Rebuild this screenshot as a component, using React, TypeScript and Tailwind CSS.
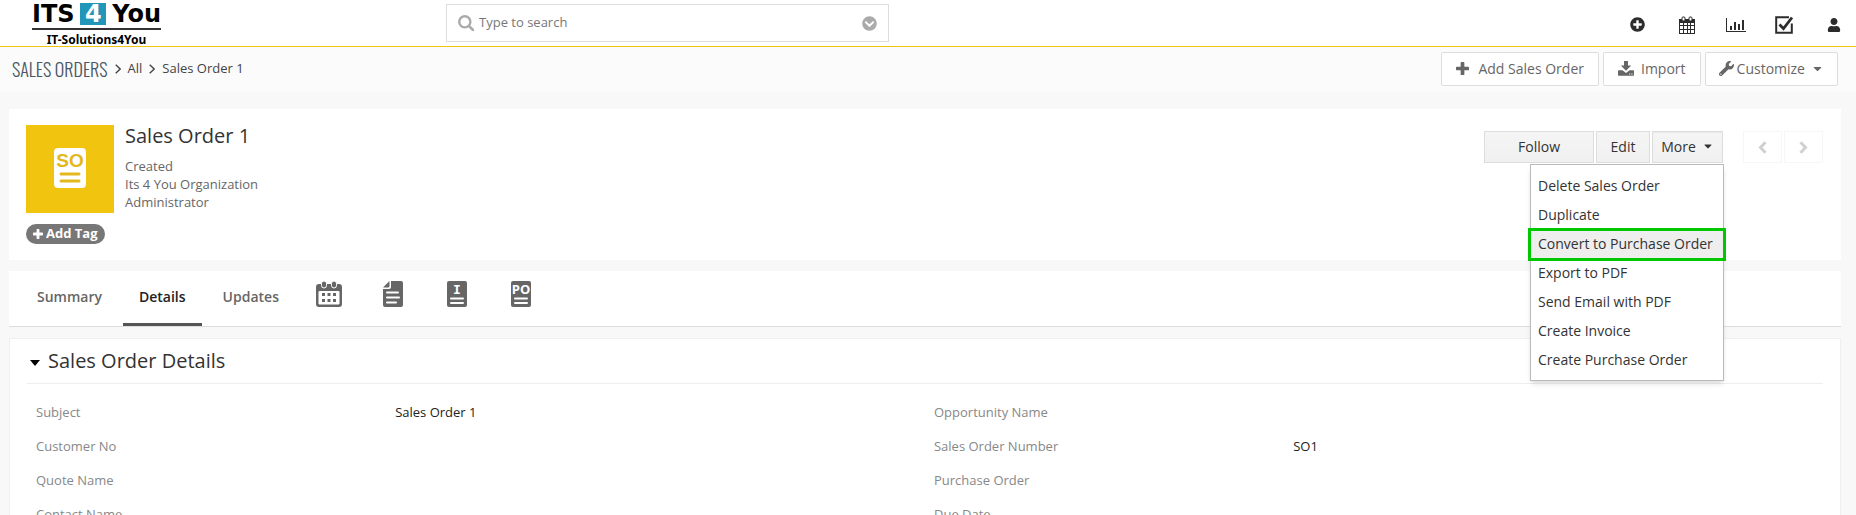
import { useState } from 'react'
import {
    FaCaretDown,
    FaChevronCircleDown,
    FaPlusCircle,
    FaUser,
    FaWrench
} from 'react-icons/fa'

const CalendarGridIcon = () => (
    <svg width="16" height="18" viewBox="0 0 16 18" aria-hidden="true">
        <path d="M0 3h16v15H0z" fill="#2c2c2c" />
        <path
            d="M1 7h3v2H1zM5 7h3v2H5zM9 7h2v2H9zM12 7h3v2h-3zM1 10h3v3H1zM5 10h3v3H5zM9 10h2v3H9zM12 10h3v3h-3zM1 14h3v3H1zM5 14h3v3H5zM9 14h2v3H9zM12 14h3v3h-3z"
            fill="#fff"
        />
        <rect x="3" y="1" width="3" height="4" rx="1" fill="#fff" stroke="#2c2c2c" />
        <rect x="10" y="1" width="3" height="4" rx="1" fill="#fff" stroke="#2c2c2c" />
    </svg>
)

const BarChartIcon = () => (
    <svg width="20" height="16" viewBox="0 0 20 16" fill="#2c2c2c" aria-hidden="true">
        <path d="M0 1h1v13h19v1H0zM4 9h2v4H4zM8 5h2v8H8zM12 7h2v6h-2zM16 3h2v10h-2z" />
    </svg>
)

const TaskIcon = () => (
    <svg width="19" height="18" viewBox="0 0 19 18" fill="none" stroke="#2c2c2c" aria-hidden="true">
        <path d="M14 1.2H1.2v15.6h15.6V7.5" strokeWidth="2" />
        <path d="M4.5 8.5l4 4.2L17 1.5" strokeWidth="2.8" />
    </svg>
)

const SearchIcon = () => (
    <svg width="16" height="16" viewBox="0 0 16 16" fill="none" stroke="currentColor" aria-hidden="true">
        <circle cx="6.8" cy="6.8" r="5.6" strokeWidth="2.4" />
        <path d="M10.8 10.8 15 15" strokeWidth="2.6" strokeLinecap="round" />
    </svg>
)

const PlusIcon = ({ size }: { size: number }) => (
    <svg width={size} height={size} viewBox="0 0 14 14" fill="currentColor" aria-hidden="true">
        <path d="M5.9 0h2.2a.9.9 0 0 1 .9.9V5h4.1a.9.9 0 0 1 .9.9v2.2a.9.9 0 0 1-.9.9H9v4.1a.9.9 0 0 1-.9.9H5.9a.9.9 0 0 1-.9-.9V9H.9a.9.9 0 0 1-.9-.9V5.9A.9.9 0 0 1 .9 5H5V.9a.9.9 0 0 1 .9-.9z" />
    </svg>
)

const ImportIcon = () => (
    <svg width="16" height="15" viewBox="0 0 16 15" fill="currentColor" aria-hidden="true">
        <path d="M6 0h4v4.5h3.2L8 9.7 2.8 4.5H6z" />
        <path d="M.8 9.2h3.6L8 12l3.6-2.8h3.6a.8.8 0 0 1 .8.8v4a.8.8 0 0 1-.8.8H.8A.8.8 0 0 1 0 14v-4a.8.8 0 0 1 .8-.8z" />
        <path d="M11.2 12.4h1.1v1.1h-1.1zM13.4 12.4h1.1v1.1h-1.1z" fill="#fff" />
    </svg>
)

const Crumb = () => (
    <svg width="6" height="10" viewBox="0 0 6 10" fill="none" stroke="#444" strokeWidth="1.4" className="mx-[7px]" aria-hidden="true">
        <path d="M.7.7 5.2 5 .7 9.3" />
    </svg>
)

const PagerArrow = ({ path }: { path: string }) => (
    <svg width="9" height="13" viewBox="0 0 9 13" fill="none" stroke="#d0d0d0" strokeWidth="3" aria-hidden="true">
        <path d={path} />
    </svg>
)

const EventsIcon = () => (
    <svg width="26" height="26" viewBox="0 0 26 26" aria-hidden="true">
        <rect x="0" y="3" width="26" height="23" rx="3" fill="#666" />
        <rect x="2.5" y="10" width="21" height="13.5" rx="1" fill="#fff" />
        <rect x="5.5" y="0" width="5" height="7" rx="2.5" fill="#666" stroke="#fff" />
        <rect x="15.5" y="0" width="5" height="7" rx="2.5" fill="#666" stroke="#fff" />
        <path d="M6 12h3v3H6zM11.5 12h3v3h-3zM17 12h3v3h-3zM6 18h3v3H6zM11.5 18h3v3h-3zM17 18h3v3h-3z" fill="#666" />
    </svg>
)

const DocumentIcon = () => (
    <svg width="20" height="26" viewBox="0 0 20 26" aria-hidden="true">
        <path d="M8 0h10a2 2 0 0 1 2 2v22a2 2 0 0 1-2 2H2a2 2 0 0 1-2-2V8h6a2 2 0 0 0 2-2z" fill="#666" />
        <path d="M0 6.5 6.5 0v5a1.5 1.5 0 0 1-1.5 1.5z" fill="#666" />
        <path d="M4 11.5h11M4 16.5h12M4 21.5h9" stroke="#fff" strokeWidth="2" strokeLinecap="round" />
    </svg>
)

const ModuleIcon = ({ code }: { code: string }) => (
    <svg width="20" height="26" viewBox="0 0 20 26" aria-hidden="true">
        <rect width="20" height="26" rx="2" fill="#666" />
        <text
            x="10"
            y="13"
            textAnchor="middle"
            fill="#fff"
            fontSize="13"
            fontWeight="700"
            fontFamily={code.length > 1 ? 'Open Sans, sans-serif' : 'DejaVu Sans Mono, monospace'}
        >
            {code}
        </text>
        <path d="M4 17.5h12M4 22h12" stroke="#fff" strokeWidth="2" strokeLinecap="round" />
    </svg>
)

const menuItems = [
    'Delete Sales Order',
    'Duplicate',
    'Convert to Purchase Order',
    'Export to PDF',
    'Send Email with PDF',
    'Create Invoice',
    'Create Purchase Order'
]

const tabs = ['Summary', 'Details', 'Updates']

const relatedTabs = [
    { label: 'Calendar', icon: <EventsIcon /> },
    { label: 'Documents', icon: <DocumentIcon /> },
    { label: 'Invoices', icon: <ModuleIcon code="I" /> },
    { label: 'Purchase Orders', icon: <ModuleIcon code="PO" /> }
]

const topLinks = [
    { label: 'Quick create', icon: <FaPlusCircle size={15} /> },
    { label: 'Calendar', icon: <CalendarGridIcon /> },
    { label: 'Reports', icon: <BarChartIcon /> },
    { label: 'Tasks', icon: <TaskIcon /> },
    { label: 'User', icon: <FaUser size={14} /> }
]

const fields = [
    ['Subject', 'Sales Order 1', 'Opportunity Name', ''],
    ['Customer No', '', 'Sales Order Number', 'SO1'],
    ['Quote Name', '', 'Purchase Order', ''],
    ['Contact Name', '', 'Due Date', '']
]

const Header = () => (
    <header className="flex h-[47px] items-center justify-between border-b border-[#f1c40f] bg-white pl-8 pr-[9px]">
        <a
            href="#home"
            aria-label="ITS4You"
            className="flex h-full w-[129px] flex-col items-center pt-[3px] font-['DejaVu_Sans'] font-bold text-black"
        >
            <span className="flex w-full items-center justify-between border-b-2 border-[#333] pb-[3px] text-[24px] leading-[22px]">
                <span>ITS</span>
                <span className="w-[26px] bg-[#2196b8] text-center text-white">4</span>
                <span>You</span>
            </span>
            <span className="pt-1 font-['Noto_Sans'] text-[12px] leading-[12px]">IT-Solutions4You</span>
        </a>
        <div className="mr-auto ml-[285px] flex h-[38px] w-[443px] items-center border border-[#ddd] px-[11px] text-[#aaa]">
            <SearchIcon />
            <input
                type="text"
                aria-label="Search"
                placeholder="Type to search"
                className="min-w-0 flex-1 px-[5px] text-[13px] outline-none placeholder:text-[#777]"
            />
            <button type="button" aria-label="Advanced search">
                <FaChevronCircleDown size={15} />
            </button>
        </div>
        <nav className="flex items-center pt-[3px] text-[#2c2c2c]">
            {topLinks.map((link) => (
                <a key={link.label} href="#top" aria-label={link.label} className="ml-[22px] flex w-[27px] justify-center">
                    {link.icon}
                </a>
            ))}
        </nav>
    </header>
)

const moduleButton = 'flex h-[34px] items-center rounded-xs border border-[#ddd] bg-white pb-[2px] text-[14px] text-[#666]'

const ModuleBar = () => (
    <div className="flex h-[45px] items-start justify-between bg-[#fbfbfb] pt-[5px] pl-3 pr-[18px]">
        <div className="flex h-[34px] items-center text-[13px] text-[#444]">
            <h1 className="font-['Oswald','Open_Sans_Condensed','Roboto_Condensed','Noto_Sans_Condensed','Liberation_Sans'] text-[18px] font-light text-[#4a5865]">
                SALES ORDERS
            </h1>
            <Crumb />
            <a href="#all">All</a>
            <Crumb />
            <a href="#record">Sales Order 1</a>
        </div>
        <div className="flex gap-1">
            <button type="button" className={`${moduleButton} gap-[9px] px-[14px]`}>
                <PlusIcon size={13} />
                Add Sales Order
            </button>
            <button type="button" className={`${moduleButton} gap-[7px] px-[14px]`}>
                <ImportIcon />
                Import
            </button>
            <button type="button" className={`${moduleButton} gap-[3px] px-[13px]`}>
                <FaWrench size={15} />
                Customize
                <FaCaretDown size={13} className="ml-[3px]" />
            </button>
        </div>
    </div>
)

const recordButton = 'h-8 border border-[#ddd] bg-linear-to-b from-[#f5f5f5] to-[#f0f0f0] pb-[2px] text-[14px] text-[#333]'

const RecordHeader = () => {
    const [menuOpen, setMenuOpen] = useState(true)

    return (
        <section className="flex h-[151px] justify-between bg-white pt-4 pl-[17px] pr-[18px]">
            <div>
                <div className="flex gap-[11px]">
                    <div className="flex size-[88px] items-center justify-center bg-[#f1c40f]">
                        <svg width="32" height="42" viewBox="0 0 32 42" aria-hidden="true">
                            <rect x="0" y="0" width="32" height="40" rx="4" fill="#fff" />
                            <text
                                x="16"
                                y="19"
                                textAnchor="middle"
                                fill="#e3b81b"
                                fontSize="19"
                                fontWeight="700"
                                fontFamily="Liberation Sans, sans-serif"
                            >
                                SO
                            </text>
                            <path d="M7 26h18M7 33h18" stroke="#e3b81b" strokeWidth="3" strokeLinecap="round" />
                        </svg>
                    </div>
                    <div className="text-[13px] leading-[18px] text-[#666]">
                        <h2 className="mb-[10px] text-[20px] leading-[22px] text-[#333]">Sales Order 1</h2>
                        <p>Created</p>
                        <p>Its 4 You Organization</p>
                        <p>Administrator</p>
                    </div>
                </div>
                <button
                    type="button"
                    className="mt-[11px] flex h-5 items-center gap-[3px] rounded-full bg-[#777] px-[7px] text-[13px] font-bold text-white"
                >
                    <PlusIcon size={10} />
                    Add Tag
                </button>
            </div>
            <div className="flex items-start pt-[6px]">
                <div className="relative flex gap-[2px]">
                    <button type="button" className={`${recordButton} w-[110px]`}>Follow</button>
                    <button type="button" className={`${recordButton} w-[54px]`}>Edit</button>
                    <button
                        type="button"
                        onClick={() => setMenuOpen(!menuOpen)}
                        aria-haspopup="true"
                        aria-expanded={menuOpen}
                        className={`${recordButton} flex w-[71px] items-center justify-center gap-[6px] inset-shadow-xs`}
                    >
                        More
                        <FaCaretDown size={12} />
                    </button>
                    {menuOpen && (
                        <ul className="absolute top-[33px] -right-px z-10 w-[194px] border border-[#bbb] bg-white py-[6px] shadow-md">
                            {menuItems.map((item) => (
                                <li key={item} className="relative">
                                    <a
                                        href="#action"
                                        className={`block px-[7px] text-[14px] leading-[29px] whitespace-nowrap text-[#333] ${item === 'Convert to Purchase Order' ? 'bg-[#eee]' : ''}`}
                                    >
                                        {item}
                                    </a>
                                    {item === 'Convert to Purchase Order' && (
                                        <span className="absolute -inset-x-[3px] -top-px -bottom-[3px] border-3 border-[#00c800]" />
                                    )}
                                </li>
                            ))}
                        </ul>
                    )}
                </div>
                <div className="ml-5 flex gap-[2px]">
                    <button type="button" aria-label="Previous" className="flex h-8 w-[39px] items-center justify-center border border-[#f6f6f6]">
                        <PagerArrow path="M7.5 1.2 2.5 6.5l5 5.3" />
                    </button>
                    <button type="button" aria-label="Next" className="flex h-8 w-[39px] items-center justify-center border border-[#f6f6f6]">
                        <PagerArrow path="M1.5 1.2l5 5.3-5 5.3" />
                    </button>
                </div>
            </div>
        </section>
    )
}

const RelatedTabs = () => {
    const [active, setActive] = useState('Details')

    return (
        <nav className="mt-[11px] flex h-14 border-b border-[#ddd] bg-white pl-3 text-[14px] font-semibold">
            <div className="flex gap-[5px]">
                {tabs.map((tab) => (
                    <button
                        key={tab}
                        type="button"
                        onClick={() => setActive(tab)}
                        className={`border-b-3 px-4 pb-[2px] ${tab === active ? 'border-[#555] text-[#222]' : 'border-transparent text-[#666]'}`}
                    >
                        {tab}
                    </button>
                ))}
            </div>
            <div className="ml-[6px] flex gap-2">
                {relatedTabs.map((tab) => (
                    <button key={tab.label} type="button" aria-label={tab.label} className="flex w-14 items-start justify-center pt-[10px]">
                        {tab.icon}
                    </button>
                ))}
            </div>
        </nav>
    )
}

const DetailsBlock = () => (
    <section className="mt-[11px] border border-[#f0f0f0] bg-white px-[17px]">
        <h3 className="flex h-[45px] items-center gap-2 border-b border-[#eee] pl-[3px] text-[20px] text-[#333]">
            <svg width="10" height="6" viewBox="0 0 10 6" className="mt-1" aria-hidden="true">
                <path d="M0 0h10L5 6z" fill="#000" />
            </svg>
            Sales Order Details
        </h3>
        <table className="mt-3 w-full table-fixed text-left text-[13px]">
            <colgroup>
                <col className="w-[20%]" />
                <col className="w-[30%]" />
                <col className="w-[20%]" />
                <col className="w-[30%]" />
            </colgroup>
            <tbody>
                {fields.map(([label, value, secondLabel, secondValue]) => (
                    <tr key={label} className="h-[34px]">
                        <th scope="row" className="px-[9px] font-normal text-[#888]">{label}</th>
                        <td className="px-[9px] text-[#222]">{value}</td>
                        <th scope="row" className="px-[9px] font-normal text-[#888]">{secondLabel}</th>
                        <td className="px-[9px] text-[#222]">{secondValue}</td>
                    </tr>
                ))}
            </tbody>
        </table>
    </section>
)

export default function App() {
    return (
        <div className="h-screen overflow-hidden bg-[#f8f8f8] font-['Open_Sans',sans-serif]">
            <Header />
            <ModuleBar />
            <main className="pt-[17px] pl-[9px] pr-[15px]">
                <RecordHeader />
                <RelatedTabs />
                <DetailsBlock />
            </main>
        </div>
    )
}
